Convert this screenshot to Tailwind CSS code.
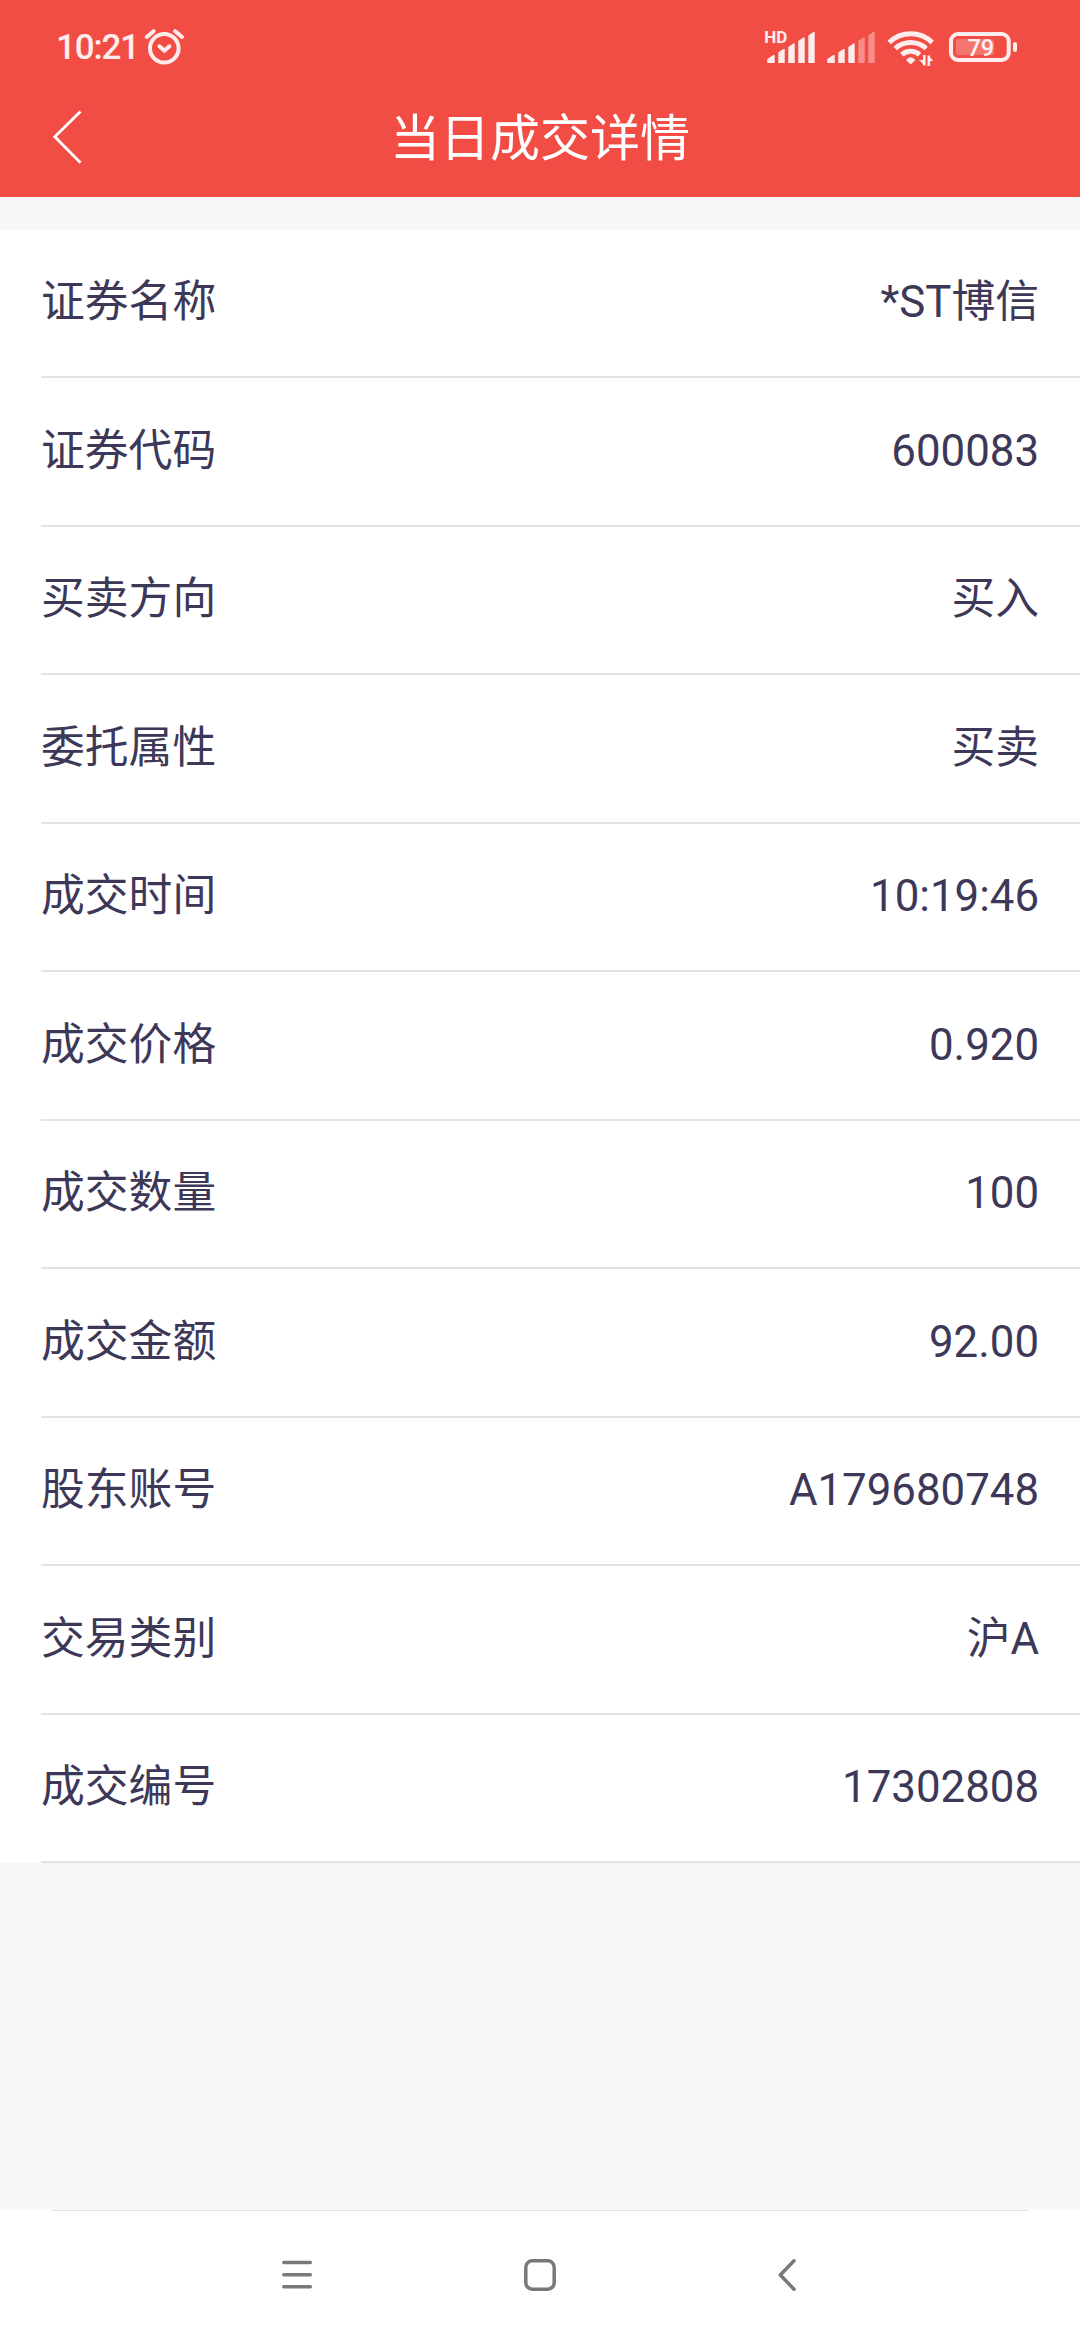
<!DOCTYPE html>
<html lang="zh-CN">
<head>
  <meta charset="UTF-8" />
  <meta name="viewport" content="width=device-width, initial-scale=1.0"/>
  <title>当日成交详情</title>
  <script src="https://cdn.jsdelivr.net/npm/@tailwindcss/browser@4"></script>
</head>
<body class="bg-[#f6f8fa] font-['Roboto','Noto_Sans_CJK_SC',sans-serif] w-[1080px] h-[2340px] flex flex-col overflow-hidden">

  <!-- Header -->
  <header class="bg-[#f14d45] h-[197px] shrink-0 flex flex-col text-white">

    <!-- Status bar -->
    <div class="h-24 flex justify-between pl-14 pr-[60px] text-white/90">
      <div class="flex">
        <span class="w-[88px] pt-[28px] text-[35px] leading-10 font-medium tracking-[-1.2px]">10:21</span>
        <svg class="w-10 h-24" viewBox="144 0 40 96" fill="none" stroke="currentColor" stroke-width="4" stroke-linecap="round" stroke-linejoin="round">
          <circle cx="164.3" cy="48.3" r="14.3"/>
          <path d="M159.5 46.3l4.9 4.4 5-4.4M146.8 37l6.8-5.8M175.2 31.2l6.8 5.8"/>
        </svg>
      </div>
      <div class="flex">
        <svg class="w-[52px] h-24 mr-[11px]" viewBox="764 0 52 96" fill="currentColor">
          <text x="764.3" y="43" font-size="17" font-weight="700">HD</text>
          <path d="M767.3 59l6-4h1.4v8h-7.4zM778.3 52.5l5-3.5h1.4v14h-6.4zM788.3 47l5-3.5h1.4v19.5h-6.4zM798.3 41l5-3.5h1.4v25.5h-6.4zM808.3 35.5l5-3.5h1.4v31h-6.4z"/>
        </svg>
        <svg class="w-[49px] h-24 mr-[10px]" viewBox="827 0 49 96" fill="currentColor">
          <path d="M827.3 59l6-4h1.4v8h-7.4zM838.3 52.5l5-3.5h1.4v14h-6.4zM848.3 47l5-3.5h1.4v19.5h-6.4z"/>
          <path opacity=".4" d="M858.3 41l5-3.5h1.4v25.5h-6.4zM868.3 35.5l5-3.5h1.4v31h-6.4z"/>
        </svg>
        <svg class="w-[50px] h-24 mr-[12px]" viewBox="886 0 50 96" fill="none" stroke="currentColor" stroke-width="5">
          <path d="M889.2 42.5a31 31 0 0 1 43 0M895.2 48.5a23 23 0 0 1 31 0M901.8 54.8a13 13 0 0 1 17.8 0"/>
          <path fill="currentColor" stroke="none" d="M906 60q4.7-5.5 9.4 0l-4.7 4.5z"/>
          <path stroke-width="2.6" d="M924.3 55v10.5M928.8 66v-10.5"/>
          <path fill="currentColor" stroke="none" d="M919 60h5.6v5.5zM928.3 55.5l5 5.5h-5z"/>
        </svg>
        <svg class="w-[72px] h-24" viewBox="948 0 72 96" fill="none">
          <rect x="951" y="34" width="57.7" height="26" rx="7" stroke="currentColor" stroke-width="4"/>
          <rect x="1013" y="42" width="4" height="10" rx="2" fill="currentColor"/>
          <rect x="956" y="39" width="38" height="16" rx="2.5" fill="currentColor" opacity=".25"/>
          <text x="967.5" y="56" font-size="23.5" font-weight="500" fill="currentColor">79</text>
        </svg>
      </div>
    </div>

    <!-- Title bar -->
    <div class="h-[101px] flex px-[52px]">
      <svg class="w-8 h-[101px]" viewBox="52 96 32 101" fill="none" stroke="white" stroke-width="2.8">
        <path d="M80.5 111.5L54.8 136.7l25.7 26"/>
      </svg>
      <h1 class="flex-1 text-center text-[50px] leading-[86px] pr-8">当日成交详情</h1>
    </div>
  </header>

  <!-- Detail rows -->
  <main class="mt-[33px] h-[1633px] shrink-0 bg-white text-[#3d3857] text-[43.8px] leading-[60px]">
    <dl id="detailList" class="h-full grid grid-rows-11"></dl>
  </main>

  <!-- Navigation bar -->
  <nav class="mt-auto h-[130px] shrink-0 bg-white px-[52px]">
    <div class="border-t border-[#e1e4e7]">
      <svg class="w-[976px] h-[129px]" viewBox="52 2211 976 129" fill="none" stroke="#797979" stroke-width="3.5" stroke-linecap="round" stroke-linejoin="round">
        <path d="M283.8 2262.6h26.5M283.8 2274.7h26.5M283.8 2286.8h26.5"/>
        <rect x="525.8" y="2260.8" width="28.4" height="28.4" rx="6.5"/>
        <path d="M794 2260.8l-13.7 14.2 13.7 14.2"/>
      </svg>
    </div>
  </nav>

  <script>
    const details = [
      ['证券名称', '*ST博信'],
      ['证券代码', '600083'],
      ['买卖方向', '买入'],
      ['委托属性', '买卖'],
      ['成交时间', '10:19:46'],
      ['成交价格', '0.920'],
      ['成交数量', '100'],
      ['成交金额', '92.00'],
      ['股东账号', 'A179680748'],
      ['交易类别', '沪A'],
      ['成交编号', '17302808'],
    ];

    document.getElementById('detailList').innerHTML = details.map(([label, value]) => `
      <div class="ml-[41px] pr-[41px] pb-[1.5px] flex justify-between items-center border-b-2 border-[#e3e3e3]">
        <dt>${label}</dt>
        <dd>${value}</dd>
      </div>
    `).join('');
  </script>
</body>
</html>
